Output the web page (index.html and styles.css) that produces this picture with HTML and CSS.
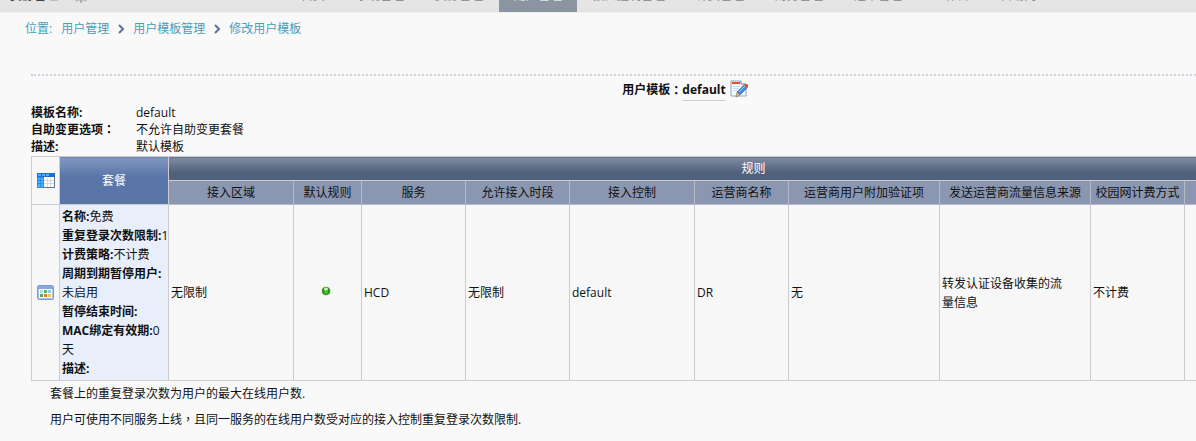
FILE: index.html
```html
<!DOCTYPE html>
<html lang="zh-CN">
<head>
    <meta charset="UTF-8">
    <meta name="viewport" content="width=device-width, initial-scale=1.0">
    <title>修改用户模板</title>
    <link rel="stylesheet" href="styles.css">
</head>
<body>
    <header class="topbar">
        <div class="brand">
            <a href="#">资源管理</a>
            <svg class="gear" width="14" height="14" viewBox="0 0 14 14">
                <circle cx="7" cy="7" r="4" fill="none" stroke="#a9adb5" stroke-width="2"/>
                <path d="M7 0v3M7 11v3M0 7h3M11 7h3M2 2l2 2M10 10l2 2M12 2l-2 2M4 10l-2 2" stroke="#a9adb5" stroke-width="2"/>
            </svg>
        </div>
        <nav class="menu">
            <a href="#">首页</a>
            <a href="#">系统管理</a>
            <a href="#">资源管理</a>
            <a href="#" class="active">用户管理</a>
            <a href="#">接入控制管理</a>
            <a href="#">计费管理</a>
            <a href="#">财务管理</a>
            <a href="#">运维管理</a>
            <a href="#">工作台</a>
            <a href="#">自助网</a>
        </nav>
    </header>

    <nav class="crumbs">
        <span>位置:</span>
        <a href="#">用户管理</a>
        <svg width="6" height="10" viewBox="0 0 6 10"><path d="M1 1l4 4-4 4" fill="none" stroke="#5d73a5" stroke-width="2"/></svg>
        <a href="#">用户模板管理</a>
        <svg width="6" height="10" viewBox="0 0 6 10"><path d="M1 1l4 4-4 4" fill="none" stroke="#5d73a5" stroke-width="2"/></svg>
        <a href="#">修改用户模板</a>
    </nav>

    <main class="content">
        <h1 class="title">
            用户模板<span class="mark" lang="zh-TW">：</span><span class="title-name">default</span>
            <a href="#" aria-label="修改">
                <svg width="18" height="18" viewBox="0 0 18 18">
                    <path d="M1 1h10v3h5v12H1z" fill="#f4f9fd" stroke="#98a2ac"/>
                    <path d="M11 1v3h5" fill="none" stroke="#98a2ac"/>
                    <path d="M2 3h8" stroke="#ee4b2b" stroke-width="2"/>
                    <path d="M3 6.500h7M3 8.500h6M3 10.500h4" stroke="#bfe0f5"/>
                    <path d="M7 12l7-7 3 3-7 7z" fill="#3f8ae0" stroke="#2a65b5" stroke-width=".6"/>
                    <path d="M9 12l6-6" stroke="#9fd0ff"/>
                    <path d="M14 5l1-1h2l1 1v2l-1 1z" fill="#e8492f"/>
                    <path d="M7 12l3 3-4 2z" fill="#e9b964" stroke="#8c6a3a" stroke-width=".6"/>
                </svg>
            </a>
        </h1>

        <dl class="info">
            <dt>模板名称:</dt>
            <dd>default</dd>
            <dt>自助变更选项<span class="mark" lang="zh-TW">：</span></dt>
            <dd>不允许自助变更套餐</dd>
            <dt>描述:</dt>
            <dd>默认模板</dd>
        </dl>

        <table class="rules">
            <colgroup>
                <col class="c-icon">
                <col class="c-plan">
                <col class="c-large">
                <col class="c-flag">
                <col class="c-medium">
                <col class="c-medium">
                <col class="c-large">
                <col class="c-small">
                <col class="c-wide">
                <col class="c-wide">
                <col class="c-small">
                <col class="c-last">
            </colgroup>
            <thead>
                <tr>
                    <td rowspan="2" class="icon">
                        <svg width="18" height="15" viewBox="0 0 18 15">
                            <path d="M0 0h18v15H0z" fill="#2f8fe6"/>
                            <path d="M0 0h18v4H0z" fill="#1a6fd6"/>
                            <path d="M1 1h3v2H1zM5 1h3v2H5zM9 1h3v2H9zM1 5h2v2H1zM4 5h2v2H4zM1 8h2v2H1zM4 8h2v2H4zM1 11h2v3H1zM4 11h2v3H4z" fill="#45b4ff"/>
                            <path d="M7 4h10v10H7z" fill="#fff"/>
                            <path d="M7 7.500h10M7 10.500h10M10.500 5v9M13.500 5v9" stroke="#d5d9e2"/>
                            <path d="M6.500 14.500h11V4" fill="none" stroke="#66718f"/>
                        </svg>
                    </td>
                    <th rowspan="2" class="plan-head">套餐</th>
                    <th colspan="10" class="group-head">规则</th>
                </tr>
                <tr class="sub-head">
                    <th>接入区域</th>
                    <th>默认规则</th>
                    <th>服务</th>
                    <th>允许接入时段</th>
                    <th>接入控制</th>
                    <th>运营商名称</th>
                    <th>运营商用户附加验证项</th>
                    <th>发送运营商流量信息来源</th>
                    <th>校园网计费方式</th>
                    <th></th>
                </tr>
            </thead>
            <tbody>
                <tr>
                    <td class="icon">
                        <svg width="17" height="15" viewBox="0 0 17 15">
                            <rect x=".5" y=".5" width="16" height="14" rx="1" fill="#fff" stroke="#7e9dd6"/>
                            <path d="M1 1h15v3H1z" fill="#86a9e4"/>
                            <path d="M1.500 4v10M15.500 4v10M1 13.500h15" stroke="#a9c1ec"/>
                            <path d="M3 5h3v3H3z" fill="#a8dcf5"/>
                            <path d="M7 5h3v3H7z" fill="#58b947"/>
                            <path d="M11 5h3v3h-3z" fill="#8ecdf2"/>
                            <path d="M3 9h3v3H3z" fill="#4fb04c"/>
                            <path d="M7 9h3v3H7z" fill="#f0703c"/>
                            <path d="M11 9h3v3h-3z" fill="#f6c944"/>
                        </svg>
                    </td>
                    <td class="plan">
                        <div><b>名称:</b>免费</div>
                        <div class="limit"><b>重复登录次数限制:</b>1</div>
                        <div><b>计费策略:</b>不计费</div>
                        <div><b>周期到期暂停用户:</b> 未启用</div>
                        <div><b>暂停结束时间:</b></div>
                        <div><b>MAC绑定有效期:</b>0 天</div>
                        <div><b>描述:</b></div>
                    </td>
                    <td>无限制</td>
                    <td class="flag">
                        <svg width="12" height="12" viewBox="0 0 12 12">
                            <circle cx="6" cy="6" r="5" fill="#c9f5b4"/>
                            <circle cx="6" cy="6" r="4" fill="#2f8a1c"/>
                            <circle cx="6" cy="7" r="2" fill="#4fbd30"/>
                            <ellipse cx="6" cy="4" rx="2" ry="1.500" fill="#d3f5c4"/>
                        </svg>
                    </td>
                    <td>HCD</td>
                    <td>无限制</td>
                    <td>default</td>
                    <td>DR</td>
                    <td>无</td>
                    <td class="source">转发认证设备收集的流量信息</td>
                    <td>不计费</td>
                    <td></td>
                </tr>
            </tbody>
        </table>

        <div class="notes">
            <p>套餐上的重复登录次数为用户的最大在线用户数.</p>
            <p>用户可使用不同服务上线<span class="mark" lang="zh-TW">，</span>且同一服务的在线用户数受对应的接入控制重复登录次数限制.</p>
        </div>
    </main>
</body>
</html>
```

FILE: styles.css
```css
* {
    margin: 0;
    padding: 0;
    box-sizing: border-box;
}

body {
    background: #f9f9f9;
    color: #111;
    font-family: "Open Sans", "Noto Sans CJK SC", sans-serif;
    font-size: 12px;
    line-height: 16px;
    overflow: hidden;
}

a {
    color: inherit;
    text-decoration: none;
}

svg {
    display: block;
}

/* centred full-width punctuation */
.mark {
    font-family: "Noto Sans CJK TC", sans-serif;
    line-height: 1;
}

/* top menu */
.topbar {
    display: flex;
    align-items: flex-end;
    height: 13px;
    background: #e5e5e5;
    border-bottom: 1px solid #eee;
    overflow: hidden;
    white-space: nowrap;
}

.brand {
    display: flex;
    align-items: flex-end;
    gap: 16px;
    width: 286px;
    flex-shrink: 0;
    padding: 0 0 8px 10px;
    color: #444;
    font-weight: bold;
}

.gear {
    margin-bottom: 1px;
}

.menu {
    display: flex;
    gap: 1px;
    color: #888;
}

.menu a {
    padding: 8px 15px;
}

.menu .active {
    background: #8b95a1;
    color: #e5e5e5;
}

/* breadcrumb */
.crumbs {
    display: flex;
    align-items: center;
    gap: 9px;
    padding: 8px 25px;
    color: #4a9dbb;
}

/* template details, wider than the window like the table */
.content {
    width: max-content;
    margin: 29px 0 0 31px;
}

.title {
    display: flex;
    justify-content: center;
    padding: 4px 0 3px;
    border-top: 2px dotted #cdd1dc;
    font-size: 12px;
    line-height: 20px;
}

.title .mark {
    line-height: 20px;
}

.title-name {
    margin-right: 4px;
    border-bottom: 1px solid #ccc;
}

.info {
    display: grid;
    grid-template-columns: 105px auto;
    line-height: 17px;
}

.info dt {
    font-weight: bold;
}

.rules {
    width: 1307px;
    table-layout: fixed;
    border-collapse: collapse;
    margin-top: 1px;
}

.c-icon { width: 28px; }
.c-plan { width: 109px; }
.c-large { width: 125px; }
.c-flag { width: 68px; }
.c-medium { width: 104px; }
.c-small { width: 94px; }
.c-wide { width: 151px; }
.c-last { width: 154px; }

.rules th,
.rules td {
    height: 24px;
    border: 1px solid #ccc;
}

.rules th {
    font-weight: normal;
}

.rules td {
    padding: 2px 0 2px 2px;
    background: #f7f7f7;
    line-height: 19px;
}

.rules .plan-head {
    background: linear-gradient(#8298c2, #5a76a8 40%);
    color: #fff;
}

.rules .group-head {
    background: linear-gradient(#7f8ca3, #51617c 65%);
    color: #fff;
}

.rules .sub-head th {
    background: #8b97b0;
    border-color: #b4bac6;
}

.rules .icon {
    padding: 0 5px;
}

.rules .plan {
    background: #e8effa;
}

.limit {
    white-space: nowrap;
}

.rules .flag {
    padding: 0 4px 4px 0;
}

.flag svg {
    margin: 0 auto;
}

.rules .source {
    padding-right: 20px;
}

.notes {
    padding: 0 19px;
    line-height: 26px;
}
```
